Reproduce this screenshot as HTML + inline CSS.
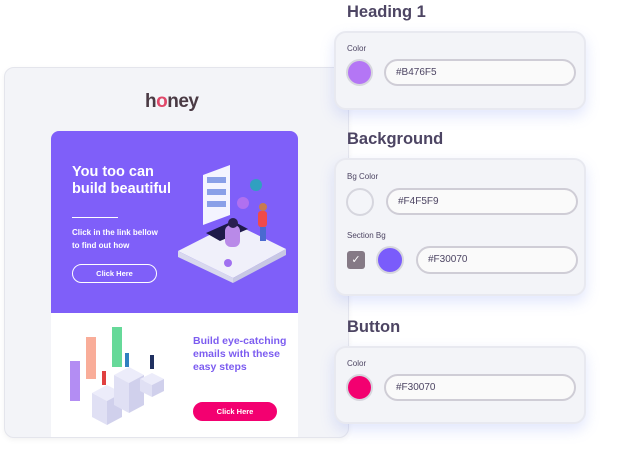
<!DOCTYPE html>
<html><head><meta charset="utf-8"><style>
*{margin:0;padding:0;box-sizing:border-box}
body{width:619px;height:459px;background:#fff;position:relative;overflow:hidden;font-family:"Liberation Sans",Arial,sans-serif}
.abs{position:absolute}
.card{left:4px;top:67px;width:345px;height:371px;background:#f3f4f8;border:1px solid #e4e5ec;border-radius:10px;box-shadow:0 2px 6px rgba(0,0,0,.05)}
.purple{left:51px;top:131px;width:247px;height:182px;background:#7f5ff9;border-radius:8px 8px 0 0}
.white{left:51px;top:313px;width:247px;height:124px;background:#fff}
.h{color:#fff;font-weight:bold;font-size:14.5px;line-height:17px;left:72px;top:164px}
.t{color:#fff;font-weight:bold;font-size:8px;line-height:13px;left:72px;top:226px}
.btn{border:1px solid #fff;border-radius:10px;color:#fff;font-size:7.5px;font-weight:bold;text-align:center;line-height:17px}
.panel{left:334px;width:252px;background:#f3f4f8;border:2px solid #e8e9f0;border-radius:12px;box-shadow:0 6px 14px rgba(120,140,240,.22)}
.sec{left:347px;font-size:16.5px;font-weight:bold;color:#4d4563}
.lbl{font-size:8px;color:#4d4563}
.circ{border-radius:50%;border:2px solid #d6d6de}
.inp{background:#fafafa;border:2px solid #cfcdd6;border-radius:14px;font-size:10px;color:#4d4563;padding-left:10px;line-height:23px}
</style></head><body>
<div class="abs card"></div>
<div class="abs" style="left:145px;top:91px;font-size:19px;font-weight:bold;color:#4a3a44;letter-spacing:-0.5px">h<span style="color:#e0486a">o</span>ney</div>
<div class="abs purple"></div>
<div class="abs white"></div>
<div class="abs h">You too can<br>build beautiful</div>
<div class="abs" style="left:72px;top:217px;width:46px;height:1px;background:#fff"></div>
<div class="abs t">Click in the link bellow<br>to find out how</div>
<div class="abs btn" style="left:72px;top:264px;width:85px;height:19px">Click Here</div>
<svg class="abs" style="left:178px;top:163px" width="110" height="120" viewBox="0 0 110 120">
<polygon points="0,88 55,60 108,86 55,115" fill="#f0f0fa"/>
<polygon points="0,88 55,115 55,120 0,94" fill="#d8d8ee"/>
<polygon points="55,115 108,86 108,92 55,120" fill="#c8c8e4"/>
<polygon points="25,12 52,2 52,52 25,62" fill="#f4f4ff"/>
<rect x="29" y="14" width="19" height="6" fill="#8aa0e8"/><rect x="29" y="26" width="19" height="6" fill="#8aa0e8"/><rect x="29" y="38" width="19" height="6" fill="#8aa0e8"/>
<polygon points="28,70 55,58 70,66 42,78" fill="#1e1a4a"/>
<rect x="47" y="62" width="15" height="22" rx="6" fill="#b98ae8"/>
<circle cx="55" cy="60" r="5" fill="#2a2050"/>
<rect x="80" y="48" width="9" height="16" rx="3" fill="#f04a4a"/>
<rect x="82" y="64" width="6" height="14" fill="#4a6ad0"/>
<circle cx="85" cy="44" r="4" fill="#c87a50"/>
<circle cx="65" cy="40" r="6" fill="#b070f0"/><circle cx="78" cy="22" r="6" fill="#30a0c0"/>
<circle cx="50" cy="100" r="4" fill="#a070f0"/>
</svg>
<svg class="abs" style="left:62px;top:323px" width="110" height="105" viewBox="0 0 110 105">
<polygon points="30,70 45,62 60,70 45,78" fill="#ececfa"/><polygon points="30,70 45,78 45,102 30,94" fill="#e0e0f4"/><polygon points="45,78 60,70 60,94 45,102" fill="#d0d0ec"/>
<polygon points="52,52 67,44 82,52 67,60" fill="#ececfa"/><polygon points="52,52 67,60 67,90 52,82" fill="#e0e0f4"/><polygon points="67,60 82,52 82,82 67,90" fill="#d0d0ec"/>
<polygon points="78,56 90,50 102,56 90,62" fill="#ececfa"/><polygon points="78,56 90,62 90,74 78,68" fill="#e0e0f4"/><polygon points="90,62 102,56 102,68 90,74" fill="#d0d0ec"/>
<rect x="8" y="38" width="10" height="40" fill="#a070f0" opacity=".8"/>
<rect x="24" y="14" width="10" height="42" fill="#f89880" opacity=".8"/>
<rect x="50" y="4" width="10" height="40" fill="#40d080" opacity=".8"/>
<rect x="40" y="48" width="4" height="14" fill="#e04040"/><rect x="63" y="30" width="4" height="14" fill="#3080c0"/><rect x="88" y="32" width="4" height="14" fill="#203060"/>
</svg>
<div class="abs" style="left:193px;top:335px;color:#7c5cf0;font-weight:bold;font-size:10.5px;line-height:13px">Build eye-catching<br>emails with these<br>easy steps</div>
<div class="abs btn" style="left:193px;top:402px;width:84px;height:19px;background:#f30070;border-color:#f30070">Click Here</div>

<div class="abs sec" style="top:3px">Heading 1</div>
<div class="abs panel" style="top:31px;height:79px"></div>
<div class="abs lbl" style="left:347px;top:44px">Color</div>
<div class="abs circ" style="left:346px;top:59px;width:27px;height:27px;background:#b476f5"></div>
<div class="abs inp" style="left:384px;top:59px;width:192px;height:27px">#B476F5</div>

<div class="abs sec" style="top:130px">Background</div>
<div class="abs panel" style="top:158px;height:138px"></div>
<div class="abs lbl" style="left:347px;top:172px">Bg Color</div>
<div class="abs circ" style="left:346px;top:188px;width:28px;height:28px;background:#f4f5f9"></div>
<div class="abs inp" style="left:386px;top:188px;width:192px;height:27px">#F4F5F9</div>
<div class="abs lbl" style="left:347px;top:231px">Section Bg</div>
<div class="abs" style="left:347px;top:251px;width:18px;height:18px;background:#857a86;border-radius:3px;color:#fff;font-size:11px;text-align:center;line-height:18px">✓</div>
<div class="abs circ" style="left:376px;top:246px;width:28px;height:28px;background:#7a5cfb"></div>
<div class="abs inp" style="left:416px;top:246px;width:162px;height:28px">#F30070</div>

<div class="abs sec" style="top:318px">Button</div>
<div class="abs panel" style="top:346px;height:78px"></div>
<div class="abs lbl" style="left:347px;top:359px">Color</div>
<div class="abs circ" style="left:346px;top:374px;width:27px;height:27px;background:#f30070"></div>
<div class="abs inp" style="left:384px;top:374px;width:192px;height:27px">#F30070</div>
</body></html>
